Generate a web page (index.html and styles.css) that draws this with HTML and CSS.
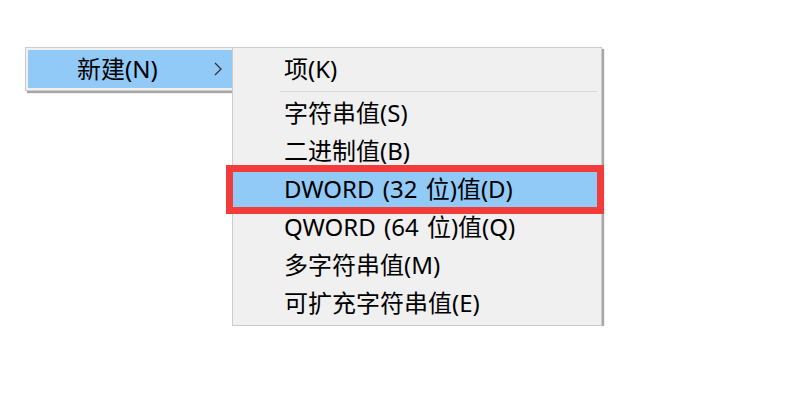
FILE: index.html
```html
<!DOCTYPE html>
<html>
	<head>
		<meta charset="UTF-8">
		<title>新建</title>
		<link rel="stylesheet" href="styles.css">
	</head>
	<body>
		<div class="desk">
			<div class="menu parent">
				<div class="item active">
					<span class="label">新建(N)</span>
					<svg class="arrow" width="8" height="14" viewBox="0 0 8 14"><path d="M1 1 L7 7 L1 13" fill="none" stroke="#333" stroke-width="1.3"/></svg>
				</div>
			</div>
			<div class="menu sub">
				<div class="item">项(K)</div>
				<div class="sep"></div>
				<div class="item">字符串值(S)</div>
				<div class="item">二进制值(B)</div>
				<div class="item active">DWORD (32 位)值(D)<span class="mark"></span></div>
				<div class="item">QWORD (64 位)值(Q)</div>
				<div class="item">多字符串值(M)</div>
				<div class="item">可扩充字符串值(E)</div>
			</div>
		</div>
	</body>
</html>
```

FILE: styles.css
```css
body{
	margin: 0;
	background: #FFF;
	font-family: "Noto Sans", "Noto Sans CJK SC", sans-serif;
	color: #000;
}
.desk{
	display: flex;
	align-items: flex-start;
	padding: 47px 0 0 25px;
}
.menu{
	background: #F0F0F0;
	border: solid 1px #CCCCCC;
	box-shadow: 2px 2px 1px rgba(0,0,0,0.35);
}
.parent{
	width: 204px;
	padding: 2px 0 2px 2px;
	box-sizing: content-box;
}
.sub{
	width: 368px;
	padding: 2px 0 3px 0;
	margin-left: -1px;
	position: relative;
	z-index: 1;
}
.item{
	height: 38px;
	line-height: 38px;
	font-size: 24px;
	padding-left: 51px;
	position: relative;
	white-space: nowrap;
	word-spacing: 2px;
}
.parent .item{
	padding-left: 49px;
	display: flex;
	align-items: center;
}
.item.active{
	background: #91C9F7;
}
.arrow{
	position: absolute;
	left: 186px;
	top: 12px;
}
.sep{
	height: 1px;
	background: #D7D7D7;
	margin: 3px 4px 2px 47px;
}
/* red frame drawn over the DWORD row */
.mark{
	position: absolute;
	left: -7px;
	right: -3px;
	top: -5px;
	bottom: -6px;
	border: solid 7px #F23B3B;
}
```
